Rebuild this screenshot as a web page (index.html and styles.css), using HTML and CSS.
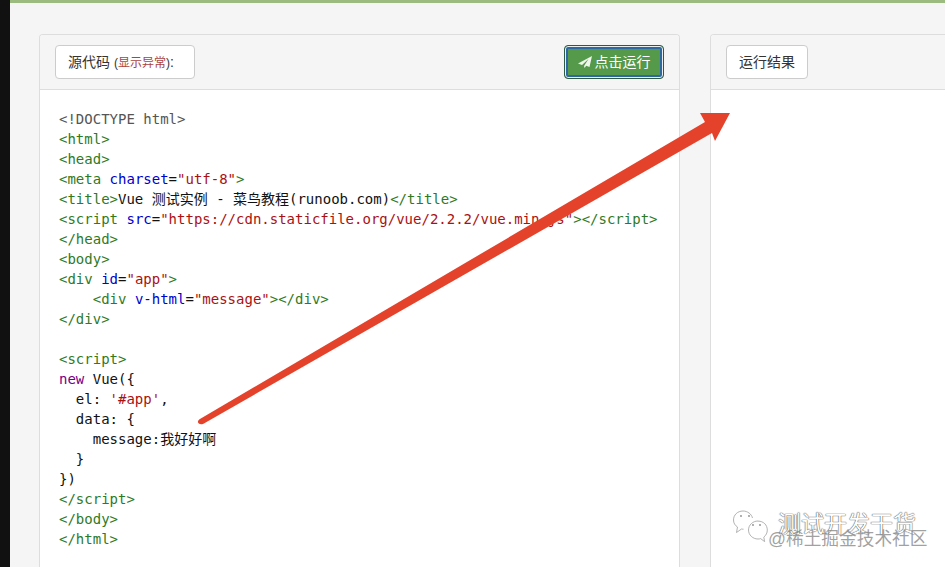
FILE: index.html
```html
<!DOCTYPE html>
<html lang="zh">
<head>
<meta charset="utf-8">
<title>Vue 测试实例</title>
<link rel="stylesheet" href="styles.css">
</head>
<body>
<div class="page">
  <div class="strip"></div>
  <div class="main">
    <div class="topbar"></div>
    <div class="panels">
      <section class="panel left">
        <header class="panel-head">
          <div class="tag tag-src">源代码 <span class="paren">(<span class="red">显示异常</span>)</span>:</div>
          <button class="run"><svg class="plane" viewBox="0 0 14 12" aria-hidden="true"><path d="M14 0 0 7.500 4 9 10.500 3 6 10 6.500 12 8.200 9.800 11.500 11z"/></svg>点击运行</button>
        </header>
<pre class="code"><span class="m">&lt;!DOCTYPE html&gt;</span>
<span class="t">&lt;html&gt;</span>
<span class="t">&lt;head&gt;</span>
<span class="t">&lt;meta</span> <span class="a">charset</span>=<span class="s">"utf-8"</span><span class="t">&gt;</span>
<span class="t">&lt;title&gt;</span>Vue 测试实例 - 菜鸟教程(runoob.com)<span class="t">&lt;/title&gt;</span>
<span class="t">&lt;script</span> <span class="a">src</span>=<span class="s">"https://cdn.staticfile.org/vue/2.2.2/vue.min.js"</span><span class="t">&gt;&lt;/script&gt;</span>
<span class="t">&lt;/head&gt;</span>
<span class="t">&lt;body&gt;</span>
<span class="t">&lt;div</span> <span class="a">id</span>=<span class="s">"app"</span><span class="t">&gt;</span>
    <span class="t">&lt;div</span> <span class="a">v-html</span>=<span class="s">"message"</span><span class="t">&gt;&lt;/div&gt;</span>
<span class="t">&lt;/div&gt;</span>

<span class="t">&lt;script&gt;</span>
<span class="k">new</span> Vue({
  el: <span class="s">'#app'</span>,
  data: {
    message:我好好啊
  }
})
<span class="t">&lt;/script&gt;</span>
<span class="t">&lt;/body&gt;</span>
<span class="t">&lt;/html&gt;</span></pre>
      </section>
      <section class="panel right">
        <header class="panel-head">
          <div class="tag tag-res">运行结果</div>
        </header>
      </section>
    </div>
  </div>
</div>
<svg class="arrow" viewBox="0 0 945 567" aria-hidden="true">
  <path d="M199.500 419.200 705 122 700 113 730 113 715 141 712 133 203 424Q199 425 198 422.500Q197.500 420.500 199.500 419.200z"/>
</svg>
<div class="mark">
  <svg class="wechat" viewBox="0 0 35 34" aria-hidden="true">
    <path d="M19.500 9C18.500 5 14.500 2 10 2 4.500 2 .5 6 .5 11c0 3 1.500 5.500 4 7l-1 5.500 5-3.500c.8.2 1.500.2 2 .2"/>
    <path d="M25 12c-5.200 0-9.500 4-9.500 9s4.300 9 9.500 9c1 0 1.800-.1 2.600-.4l4 3-.8-4.500c2.200-1.700 3.500-4.200 3.500-7 0-5-3.600-9-9.300-9z"/>
    <circle cx="8" cy="7" r=".9"/><circle cx="16" cy="7" r=".9"/>
    <circle cx="20" cy="16" r=".9"/><circle cx="27" cy="16" r=".9"/>
  </svg>
  <span class="mark-title">测试开发干货</span>
  <span class="mark-sub">@稀土掘金技术社区</span>
</div>
</body>
</html>
```
FILE: styles.css
```css
* { box-sizing: border-box; }
html, body { margin: 0; height: 100%; overflow: hidden; }
body { background: #f5f5f6; font-family: "Liberation Sans", "Noto Sans CJK SC", sans-serif; }
.page { display: flex; height: 567px; width: 945px; overflow: hidden; }
.strip { flex: 0 0 10px; background: #111; }
.main { flex: 1; min-width: 0; display: flex; flex-direction: column; }
.topbar { flex: 0 0 3px; background: #9cbb80; }
.panels { display: flex; gap: 30px; padding: 31px 0 0 29px; flex: 1; }
.panel { background: #fff; border: 1px solid #ddd; border-bottom: 0; border-radius: 4px 4px 0 0; flex: 0 0 auto; }
.left { width: 641px; }
.right { width: 300px; }
.panel-head { height: 55px; background: #f5f5f6; border-bottom: 1px solid #ddd; padding: 10px 15px 0; display: flex; justify-content: space-between; align-items: flex-start; border-radius: 3px 3px 0 0; }
.tag { height: 34px; background: #fff; border: 1px solid #ccc; border-radius: 4px; color: #333; font-size: 14px; line-height: 32px; padding: 0 12px; white-space: nowrap; }
.tag-src { width: 140px; }
.tag-res { width: 82px; }
.paren { font-size: 12px; }
.red { color: #a94442; }
.run { width: 100px; height: 34px; background: #55994a; color: #fff; border: 1px solid #2d5a45; border-radius: 4px; box-shadow: inset 0 0 0 1px #eaf0ee, inset 0 0 0 3px #2f67a5; font: 14px/1 "Liberation Sans", "Noto Sans CJK SC", sans-serif; padding: 0; display: flex; align-items: center; justify-content: center; gap: 3px; }
.plane { width: 14px; height: 12px; fill: #eef5ea; }
.code { margin: 0; padding: 19px 19px 0; font: 14px/20px "DejaVu Sans Mono", "Noto Sans CJK SC", monospace; color: #111; white-space: pre; }
.m { color: #555; }
.t { color: #2f7a1f; }
.a { color: #0000cc; }
.s { color: #aa1111; }
.k { color: #770088; }
.arrow { position: absolute; left: 0; top: 0; width: 945px; height: 567px; pointer-events: none; }
.arrow path { fill: #e5422b; }
.mark { position: absolute; left: 733px; top: 509px; width: 205px; height: 50px; }
.wechat { position: absolute; left: 0; top: 0; width: 35px; height: 34px; fill: none; stroke: #a0a0a0; stroke-width: .8; }
.wechat circle { fill: #8c8c8c; stroke: none; }
.mark-title { position: absolute; left: 45px; top: 0; font-size: 23px; line-height: 30px; color: #fff; text-shadow: 0 0 1px #444, 0 0 1px #444; white-space: nowrap; }
.mark-sub { position: absolute; left: 35px; top: 18px; font-size: 17.700px; line-height: 24px; color: rgba(130,130,130,.75); white-space: nowrap; }
```
